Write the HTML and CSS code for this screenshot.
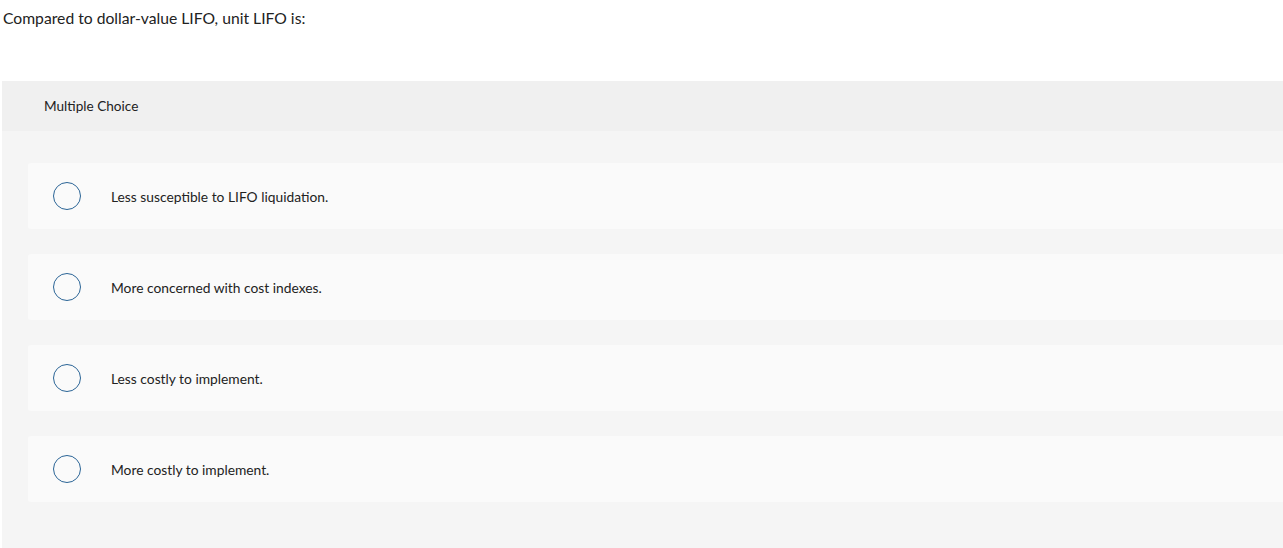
FILE: index.html
```html
<!DOCTYPE html>
<html>
<head>
<meta charset="utf-8">
<link rel="stylesheet" href="styles.css">
</head>
<body>
<div class="page">
  <p class="prompt">Compared to dollar-value LIFO, unit LIFO is:</p>
  <div class="question">
    <div class="qhead">Multiple Choice</div>
    <div class="qbody">
      <div class="option"><span class="radio"></span><span class="label">Less susceptible to LIFO liquidation.</span></div>
      <div class="option"><span class="radio"></span><span class="label">More concerned with cost indexes.</span></div>
      <div class="option"><span class="radio"></span><span class="label">Less costly to implement.</span></div>
      <div class="option"><span class="radio"></span><span class="label">More costly to implement.</span></div>
    </div>
  </div>
</div>
</body>
</html>
```

FILE: styles.css
```css
html, body {
  margin: 0;
  padding: 0;
  background: #ffffff;
  overflow: hidden;
}
.page {
  width: 1283px;
  height: 548px;
  font-family: Lato, "Liberation Sans", sans-serif;
  color: #222;
}
.prompt {
  margin: 0;
  padding: 9px 0 0 3px;
  height: 81px;
  box-sizing: border-box;
  font-size: 15.7px;
  line-height: 18px;
}
.question {
  margin-left: 2px;
  width: 1300px;
}
.qhead {
  background: #f0f0f0;
  height: 50px;
  box-sizing: border-box;
  padding-left: 42px;
  display: flex;
  align-items: center;
  font-size: 13.6px;
}
.qbody {
  background: #f5f5f5;
  padding: 32px 0 60px 26px;
  display: flex;
  flex-direction: column;
  gap: 25px;
}
.option {
  background: #fafafa;
  height: 66px;
  border-radius: 3px;
  display: flex;
  align-items: center;
  padding-left: 25px;
}
.radio {
  width: 28px;
  height: 28px;
  box-sizing: border-box;
  border: 1.5px solid #2a6496;
  border-radius: 50%;
  flex: none;
}
.label {
  margin-left: 30px;
  font-size: 13.8px;
  color: #222;
}
```
